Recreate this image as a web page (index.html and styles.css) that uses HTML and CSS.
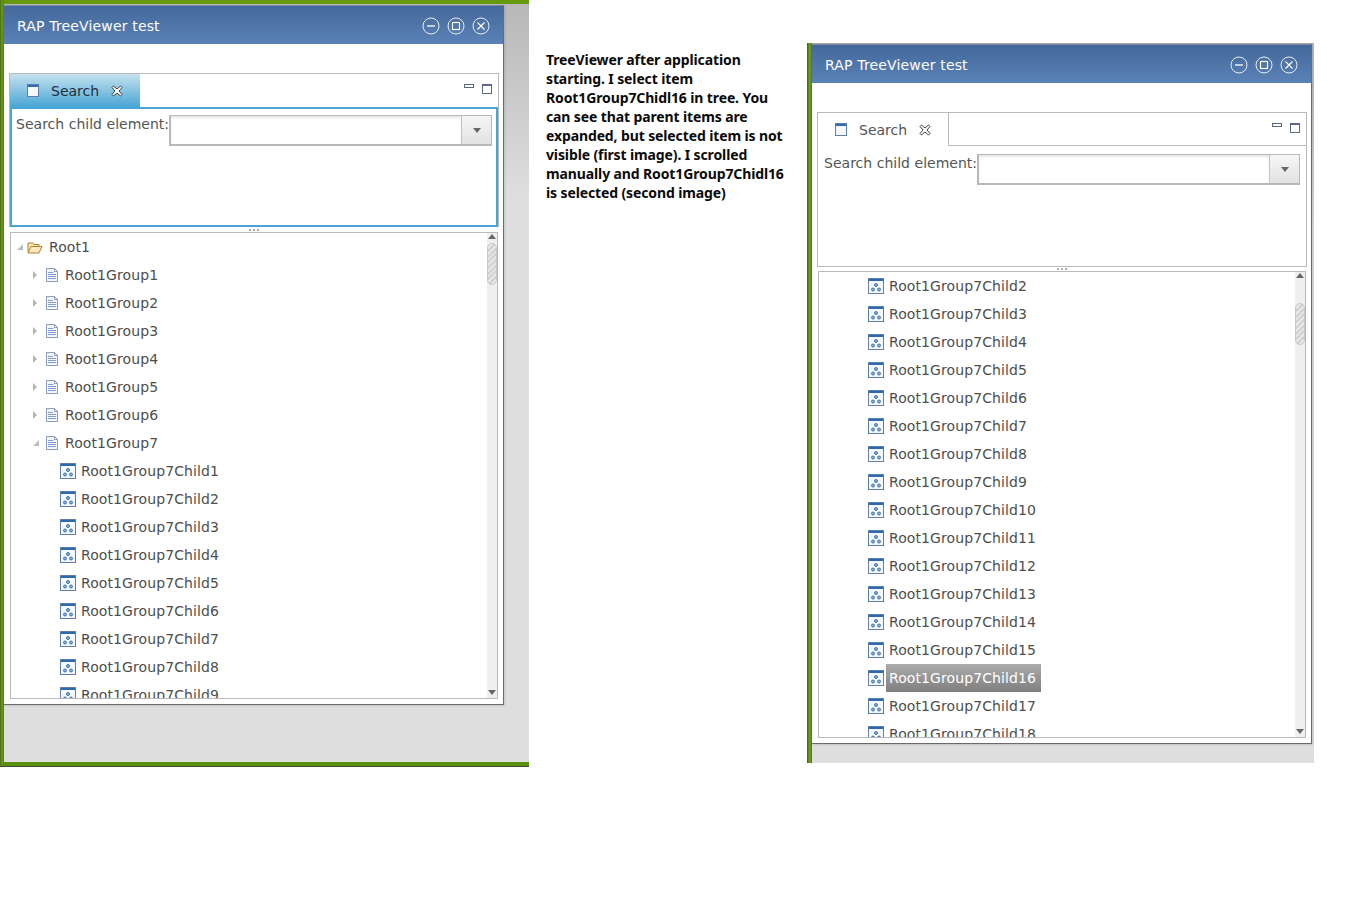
FILE: index.html
```html
<!DOCTYPE html>
<html lang="en">
<head>
<meta charset="utf-8">
<title>RAP TreeViewer test</title>
<link rel="stylesheet" href="styles.css">
</head>
<body>
<svg class="defs" width="0" height="0" aria-hidden="true">
  <symbol id="i-min" viewBox="0 0 18 18"><circle cx="9" cy="9" r="8" fill="none" stroke="#e6edf5"/><path d="M5 9h8" stroke="#fff" stroke-width="1.3"/></symbol>
  <symbol id="i-max" viewBox="0 0 18 18"><circle cx="9" cy="9" r="8" fill="none" stroke="#e6edf5"/><rect x="5.500" y="5.500" width="7" height="7" fill="none" stroke="#fff" stroke-width="1.2"/></symbol>
  <symbol id="i-close" viewBox="0 0 18 18"><circle cx="9" cy="9" r="8" fill="none" stroke="#e6edf5"/><path d="M5.500 5.500l7 7M12.500 5.500l-7 7" stroke="#fff" stroke-width="1.2"/></symbol>
  <symbol id="i-view" viewBox="0 0 12 13"><rect x=".5" y=".5" width="11" height="12" fill="#f4f8fc" stroke="#5f7ea8"/><rect x="1" y="1" width="10" height="2" fill="#2f6cb5"/></symbol>
  <symbol id="i-x" viewBox="0 0 12 12"><path d="M2.500 1L6 4L9.500 1L11 2.500L8 6L11 9.500L9.500 11L6 8L2.500 11L1 9.500L4 6L1 2.500Z" fill="#fff" stroke="#3d3d3d" stroke-width="1"/></symbol>
  <symbol id="i-folder" viewBox="0 0 16 13"><path d="M1 11.500V2h5l1 1.500h5V5.500" fill="#fbe6b8" stroke="#b9802f"/><path d="M1 12h11l3-6.500H4Z" fill="#fde9bd" stroke="#b9802f"/></symbol>
  <symbol id="i-page" viewBox="0 0 12 14"><path d="M.5.5h8l3 3v10H.5Z" fill="#f3f6fb" stroke="#8b9dbb"/><path d="M8.500.5v3h3" fill="none" stroke="#8b9dbb"/><path d="M2 4.500h5M2 6.500h8M2 8.500h8M2 10.500h8" stroke="#7f9ccd"/></symbol>
  <symbol id="i-item" viewBox="0 0 16 16"><rect x=".5" y=".5" width="15" height="15" fill="#f4f8fd" stroke="#5d7ea8"/><rect x="1" y="1" width="14" height="2" fill="#2c6ab0"/><circle cx="8" cy="7" r="1.500" fill="#8fb4d8" stroke="#2f6aa8" stroke-width=".9"/><circle cx="5" cy="11.500" r="1.500" fill="#8fb4d8" stroke="#2f6aa8" stroke-width=".9"/><circle cx="11" cy="11.500" r="1.500" fill="#8fb4d8" stroke="#2f6aa8" stroke-width=".9"/></symbol>
</svg>

<section class="desktop desktop-first">
  <div class="window">
    <header class="titlebar">
      <span class="title">RAP TreeViewer test</span>
      <svg class="winbtn"><use href="#i-min"/></svg>
      <svg class="winbtn"><use href="#i-max"/></svg>
      <svg class="winbtn"><use href="#i-close"/></svg>
    </header>
    <div class="client">
      <div class="folder folder-active">
        <div class="tabbar">
          <div class="tab">
            <svg class="tab-icon"><use href="#i-view"/></svg>
            <span class="tab-label">Search</span>
            <svg class="tab-close"><use href="#i-x"/></svg>
          </div>
          <div class="tab-fill"><span class="view-min"></span><span class="view-max"></span></div>
        </div>
        <div class="folder-body">
          <span class="field-label">Search child element:</span>
          <div class="combo"><div class="combo-text"></div><div class="combo-btn"><span class="arrow-down"></span></div></div>
        </div>
      </div>
      <div class="sash"><span></span><span></span><span></span></div>
      <div class="tree">
        <div class="rows">
          <div class="row"><span class="twist twist-open"></span><svg class="ico ico-folder"><use href="#i-folder"/></svg><span class="lbl">Root1</span></div>
          <div class="row l1"><span class="twist twist-shut"></span><svg class="ico ico-page"><use href="#i-page"/></svg><span class="lbl">Root1Group1</span></div>
          <div class="row l1"><span class="twist twist-shut"></span><svg class="ico ico-page"><use href="#i-page"/></svg><span class="lbl">Root1Group2</span></div>
          <div class="row l1"><span class="twist twist-shut"></span><svg class="ico ico-page"><use href="#i-page"/></svg><span class="lbl">Root1Group3</span></div>
          <div class="row l1"><span class="twist twist-shut"></span><svg class="ico ico-page"><use href="#i-page"/></svg><span class="lbl">Root1Group4</span></div>
          <div class="row l1"><span class="twist twist-shut"></span><svg class="ico ico-page"><use href="#i-page"/></svg><span class="lbl">Root1Group5</span></div>
          <div class="row l1"><span class="twist twist-shut"></span><svg class="ico ico-page"><use href="#i-page"/></svg><span class="lbl">Root1Group6</span></div>
          <div class="row l1"><span class="twist twist-open"></span><svg class="ico ico-page"><use href="#i-page"/></svg><span class="lbl">Root1Group7</span></div>
          <div class="row l2"><span class="twist"></span><svg class="ico ico-item"><use href="#i-item"/></svg><span class="lbl">Root1Group7Child1</span></div>
          <div class="row l2"><span class="twist"></span><svg class="ico ico-item"><use href="#i-item"/></svg><span class="lbl">Root1Group7Child2</span></div>
          <div class="row l2"><span class="twist"></span><svg class="ico ico-item"><use href="#i-item"/></svg><span class="lbl">Root1Group7Child3</span></div>
          <div class="row l2"><span class="twist"></span><svg class="ico ico-item"><use href="#i-item"/></svg><span class="lbl">Root1Group7Child4</span></div>
          <div class="row l2"><span class="twist"></span><svg class="ico ico-item"><use href="#i-item"/></svg><span class="lbl">Root1Group7Child5</span></div>
          <div class="row l2"><span class="twist"></span><svg class="ico ico-item"><use href="#i-item"/></svg><span class="lbl">Root1Group7Child6</span></div>
          <div class="row l2"><span class="twist"></span><svg class="ico ico-item"><use href="#i-item"/></svg><span class="lbl">Root1Group7Child7</span></div>
          <div class="row l2"><span class="twist"></span><svg class="ico ico-item"><use href="#i-item"/></svg><span class="lbl">Root1Group7Child8</span></div>
          <div class="row l2"><span class="twist"></span><svg class="ico ico-item"><use href="#i-item"/></svg><span class="lbl">Root1Group7Child9</span></div>
        </div>
        <div class="scrollbar">
          <span class="sb-up"></span>
          <span class="thumb thumb-top"></span>
          <span class="sb-down"></span>
        </div>
      </div>
    </div>
  </div>
</section>

<p class="note">TreeViewer after application<br>starting. I select item<br>Root1Group7Chidl16 in tree. You<br>can see that parent items are<br>expanded, but selected item is not<br>visible (first image). I scrolled<br>manually and Root1Group7Chidl16<br>is selected (second image)</p>

<section class="desktop desktop-second">
  <div class="window">
    <header class="titlebar">
      <span class="title">RAP TreeViewer test</span>
      <svg class="winbtn"><use href="#i-min"/></svg>
      <svg class="winbtn"><use href="#i-max"/></svg>
      <svg class="winbtn"><use href="#i-close"/></svg>
    </header>
    <div class="client">
      <div class="folder">
        <div class="tabbar">
          <div class="tab">
            <svg class="tab-icon"><use href="#i-view"/></svg>
            <span class="tab-label">Search</span>
            <svg class="tab-close"><use href="#i-x"/></svg>
          </div>
          <div class="tab-fill"><span class="view-min"></span><span class="view-max"></span></div>
        </div>
        <div class="folder-body">
          <span class="field-label">Search child element:</span>
          <div class="combo"><div class="combo-text"></div><div class="combo-btn"><span class="arrow-down"></span></div></div>
        </div>
      </div>
      <div class="sash"><span></span><span></span><span></span></div>
      <div class="tree">
        <div class="rows">
          <div class="row l2"><span class="twist"></span><svg class="ico ico-item"><use href="#i-item"/></svg><span class="lbl">Root1Group7Child2</span></div>
          <div class="row l2"><span class="twist"></span><svg class="ico ico-item"><use href="#i-item"/></svg><span class="lbl">Root1Group7Child3</span></div>
          <div class="row l2"><span class="twist"></span><svg class="ico ico-item"><use href="#i-item"/></svg><span class="lbl">Root1Group7Child4</span></div>
          <div class="row l2"><span class="twist"></span><svg class="ico ico-item"><use href="#i-item"/></svg><span class="lbl">Root1Group7Child5</span></div>
          <div class="row l2"><span class="twist"></span><svg class="ico ico-item"><use href="#i-item"/></svg><span class="lbl">Root1Group7Child6</span></div>
          <div class="row l2"><span class="twist"></span><svg class="ico ico-item"><use href="#i-item"/></svg><span class="lbl">Root1Group7Child7</span></div>
          <div class="row l2"><span class="twist"></span><svg class="ico ico-item"><use href="#i-item"/></svg><span class="lbl">Root1Group7Child8</span></div>
          <div class="row l2"><span class="twist"></span><svg class="ico ico-item"><use href="#i-item"/></svg><span class="lbl">Root1Group7Child9</span></div>
          <div class="row l2"><span class="twist"></span><svg class="ico ico-item"><use href="#i-item"/></svg><span class="lbl">Root1Group7Child10</span></div>
          <div class="row l2"><span class="twist"></span><svg class="ico ico-item"><use href="#i-item"/></svg><span class="lbl">Root1Group7Child11</span></div>
          <div class="row l2"><span class="twist"></span><svg class="ico ico-item"><use href="#i-item"/></svg><span class="lbl">Root1Group7Child12</span></div>
          <div class="row l2"><span class="twist"></span><svg class="ico ico-item"><use href="#i-item"/></svg><span class="lbl">Root1Group7Child13</span></div>
          <div class="row l2"><span class="twist"></span><svg class="ico ico-item"><use href="#i-item"/></svg><span class="lbl">Root1Group7Child14</span></div>
          <div class="row l2"><span class="twist"></span><svg class="ico ico-item"><use href="#i-item"/></svg><span class="lbl">Root1Group7Child15</span></div>
          <div class="row l2"><span class="twist"></span><svg class="ico ico-item"><use href="#i-item"/></svg><span class="lbl lbl-selected">Root1Group7Child16</span></div>
          <div class="row l2"><span class="twist"></span><svg class="ico ico-item"><use href="#i-item"/></svg><span class="lbl">Root1Group7Child17</span></div>
          <div class="row l2"><span class="twist"></span><svg class="ico ico-item"><use href="#i-item"/></svg><span class="lbl">Root1Group7Child18</span></div>
        </div>
        <div class="scrollbar">
          <span class="sb-up"></span>
          <span class="thumb thumb-mid"></span>
          <span class="sb-down"></span>
        </div>
      </div>
    </div>
  </div>
</section>
</body>
</html>
```
FILE: styles.css
```css
html, body { margin: 0; padding: 0; background: #fff; }
body { position: relative; width: 1368px; height: 906px; overflow: hidden; font-family: "DejaVu Sans", sans-serif; letter-spacing: .09px; }
.defs { position: absolute; }

.desktop { position: absolute; background: linear-gradient(#b8b8b8 0, #dedede 190px); }
.desktop-first {
  left: 0; top: 0; width: 529px; height: 767px; box-sizing: border-box;
  border-top: 4px solid #649a0c; border-left: 4px solid #5a8a12;
  border-bottom: 5px solid #5a9010;
}
.desktop-first .window { margin-top: 1px; }
.desktop-first::before { content: ""; position: absolute; left: -4px; top: -4px; bottom: -5px; width: 4px; background: linear-gradient(90deg, #4a6a18, #6a9c14 50%, #4f7c0e); }
.desktop-first::after { content: ""; position: absolute; left: -4px; right: 0; bottom: -5px; height: 1px; background: #3d4a30; }
.desktop-second {
  left: 807px; top: 43px; width: 507px; height: 720px; box-sizing: border-box;
  border-top: 1px solid #a8a8a8; border-left: 5px solid #5a8a12;
}
.desktop-second::before { content: ""; position: absolute; left: -5px; top: -1px; bottom: 0; width: 5px; background: linear-gradient(90deg, #3f5e18, #6fa01a 50%, #4f7c0e); }

.window {
  width: 500px; height: 700px; box-sizing: border-box; background: #fff;
  border-right: 1px solid #6a6a6a; border-bottom: 1px solid #6a6a6a;
  box-shadow: 1px 1px 2px rgba(0,0,0,.12);
  display: flex; flex-direction: column;
}
.titlebar {
  height: 39px; flex: none; display: flex; align-items: center; gap: 7px;
  padding: 2px 13px 0 13px;
  background: linear-gradient(#44689a, #5a82b7);
  border-top: 1px solid #7a8aa0; box-sizing: border-box;
}
.title { flex: 1; color: #fff; font-size: 14px; white-space: nowrap; letter-spacing: .16px; }
.winbtn { width: 18px; height: 18px; }

.client { flex: 1; min-height: 0; display: flex; flex-direction: column; padding: 29px 4px 5px 5px; }

.folder { height: 155px; flex: none; box-sizing: border-box; display: flex; flex-direction: column; border: 1px solid #bababa; }
.folder-active { height: 154px; border-bottom: 0; }
.tabbar { height: 33px; flex: none; display: flex; }
.tab { width: 131px; flex: none; box-sizing: border-box; display: flex; align-items: center; padding-left: 17px; border-right: 1px solid #bababa; }
.folder-active .tab { background: linear-gradient(#c6e1ee, #49a6d4); border-right: 1px solid #fff; }
.tab-icon { width: 12px; height: 13px; margin-right: 12px; }
.tab-label { font-size: 14px; color: #555; width: 60px; letter-spacing: 0; }
.folder-active .tab-label { color: #1f2f3d; }
.tab-close { width: 12px; height: 12px; }
.tab-fill { flex: 1; display: flex; justify-content: flex-end; align-items: flex-start; gap: 8px; padding: 10px 6px 0 0; border-bottom: 1px solid #bababa; }
.folder-active .tab-fill { border-bottom: 1px solid #fff; }
.view-min { width: 10px; height: 4px; box-sizing: border-box; border: 1px solid #5a6a85; }
.view-max { width: 10px; height: 10px; box-sizing: border-box; border: 1px solid #5a6a85; background: linear-gradient(#5a6a85 0 1px, #fff 1px); }

.folder-body { flex: 1; display: flex; align-items: flex-start; padding: 8px 6px 0 6px; }
.folder-active .folder-body { border: 2px solid #49a6d4; padding: 6px 4px 0 4px; }
.field-label { font-size: 14px; color: #555; white-space: nowrap; line-height: 18px; letter-spacing: .02px; }
.combo { flex: 1; height: 31px; box-sizing: border-box; display: flex; border: 1px solid #b8b8b8; border-width: 1px 1px 2px 2px; }
.combo-text { flex: 1; box-shadow: inset 0 2px 2px #e8e8e8; }
.combo-btn { width: 29px; border-left: 1px solid #c4c4c4; background: linear-gradient(#f6f6f6, #e2e2e2); display: flex; align-items: center; justify-content: center; }
.arrow-down { width: 0; height: 0; border-left: 4px solid transparent; border-right: 4px solid transparent; border-top: 5px solid #666; }

.sash { height: 4px; flex: none; display: flex; justify-content: center; align-items: center; gap: 2px; }
.folder-active + .sash { height: 5px; }
.sash span { width: 2px; height: 2px; background: #aaa; }

.tree { flex: 1; min-height: 0; display: flex; box-sizing: border-box; margin: 0 1px 0 1px; border: 1px solid #bababa; overflow: hidden; }
.rows { flex: 1; min-width: 0; overflow: hidden; }
.row { height: 28px; display: flex; align-items: center; padding-left: 4px; box-sizing: border-box; }
.row.l1 { padding-left: 20px; }
.row.l2 { padding-left: 36px; }
.twist { width: 12px; flex: none; display: flex; align-items: center; justify-content: center; }
.twist-shut::before { content: ""; border-left: 4px solid #b4b4b4; border-top: 4px solid transparent; border-bottom: 4px solid transparent; margin-right: 4px; }
.twist-open::before { content: ""; border-right: 6px solid #bcbcbc; border-top: 6px solid transparent; margin-right: 2px; }
.ico { flex: none; display: block; }
.ico-folder { width: 16px; height: 13px; margin: 0 1px 0 0; }
.ico-page { width: 12px; height: 14px; margin: 0 2px 0 3px; }
.ico-item { width: 16px; height: 16px; margin-left: 1px; }
.lbl { height: 28px; line-height: 28px; margin-left: 2px; padding: 0 5px 0 3px; font-size: 14px; color: #4e4e4e; white-space: nowrap; }
.lbl-selected { color: #fff; background: linear-gradient(#ababab, #7f7f7f); }

.scrollbar { width: 10px; flex: none; background: #efefef; display: flex; flex-direction: column; align-items: center; }
.sb-up { width: 0; height: 0; margin-top: 1px; border-left: 4px solid transparent; border-right: 4px solid transparent; border-bottom: 5px solid #666; }
.sb-down { width: 0; height: 0; margin-top: auto; margin-bottom: 3px; border-left: 4px solid transparent; border-right: 4px solid transparent; border-top: 5px solid #666; }
.thumb { width: 10px; height: 42px; box-sizing: border-box; border-radius: 5px; border: 1px solid #c8c8c8; background: repeating-linear-gradient(135deg, #d2d2d2 0 2px, #e8e8e8 2px 4px); }
.thumb-top { margin-top: 4px; }
.thumb-mid { margin-top: 25px; }

.note {
  position: absolute; left: 546px; top: 50px; margin: 0;
  font-family: "Noto Sans", sans-serif; font-weight: 700; font-size: 14px; line-height: 19px; color: #0a0a0a; white-space: nowrap; letter-spacing: -.12px;
}
```
